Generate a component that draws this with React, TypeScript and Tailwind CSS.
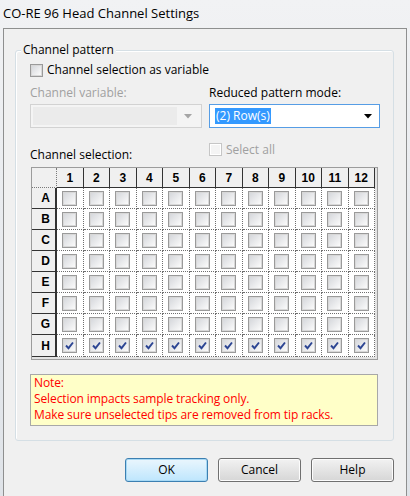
import React from 'react';

const rows = ['A', 'B', 'C', 'D', 'E', 'F', 'G', 'H'];
const cols = [1, 2, 3, 4, 5, 6, 7, 8, 9, 10, 11, 12];

const CheckBox: React.FC<{ checked?: boolean; disabled?: boolean; size?: string }> = ({
  checked,
  disabled,
  size = 'w-[13px] h-[13px]',
}) => (
  <div
    className={`${size} shrink-0 border flex items-center justify-center ${
      disabled ? 'border-[#c6c6c6] bg-[#f4f4f4]' : 'border-[#9a9a9a] bg-white'
    }`}
  >
    <div
      className={`w-full h-full border flex items-center justify-center ${
        disabled ? 'border-white bg-[#f4f4f4]' : 'border-[#d8d8d8] bg-gradient-to-br from-[#d6d8dc] to-[#fbfbfb]'
      }`}
    >
      {checked && (
        <svg width="11" height="11" viewBox="0 0 11 11">
          <path d="M2 5.5 L4.5 8.2 L9 2.5" fill="none" stroke="#2c4593" strokeWidth="1.9" />
        </svg>
      )}
    </div>
  </div>
);

const Arrow: React.FC<{ color: string }> = ({ color }) => (
  <svg width="8" height="5" viewBox="0 0 8 5">
    <path d="M0 0 L8 0 L4 4.5 Z" fill={color} />
  </svg>
);

const ChannelGrid: React.FC = () => (
  <div className="ml-[1px] w-[347px] border border-[#9c9c9c] bg-[#e3e3e3] pr-[2px] pb-[2px]">
    <div className="grid grid-cols-[25px_repeat(12,1fr)] w-[343px] font-['Liberation_Sans',sans-serif] text-[12px] font-bold text-black">
      <div className="h-[20px] bg-[#f0f0f0] border-r border-b border-dotted border-[#7a7a7a]" />
      {cols.map((c) => (
        <div
          key={c}
          className="h-[20px] bg-[#f0f0f0] border-r border-b border-[#333] flex items-center justify-center pt-[1px]"
        >
          {c}
        </div>
      ))}
      {rows.map((r) => (
        <React.Fragment key={r}>
          <div
            className={`${r === 'H' ? 'h-[22px]' : 'h-[21px]'} bg-[#f0f0f0] border-r-2 border-b border-[#333] flex items-center justify-center pl-[4px]`}
          >
            {r}
          </div>
          {cols.map((c) => (
            <div
              key={c}
              className={`${r === 'H' ? 'h-[22px]' : 'h-[21px]'} bg-white border-r border-b border-dotted border-[#6e6e6e] flex items-center justify-center`}
            >
              <CheckBox checked={r === 'H'} size="w-[15px] h-[15px]" />
            </div>
          ))}
        </React.Fragment>
      ))}
    </div>
  </div>
);

const WinButton: React.FC<{ label: string; focused?: boolean }> = ({ label, focused }) => (
  <div
    className={`w-[83px] h-[24px] rounded-[3px] border flex items-center justify-center text-[12px] text-black ${
      focused
        ? 'border-[#3c7fb1] bg-gradient-to-b from-[#eaf6fd] to-[#bee6fd] shadow-[inset_0_0_0_1px_#a7d9f5]'
        : 'border-[#707070] bg-gradient-to-b from-[#f2f2f2] to-[#d6d6d6] shadow-[inset_0_0_0_1px_#fcfcfc]'
    }`}
  >
    {label}
  </div>
);

export default function App() {
  return (
    <div className="w-[410px] h-[496px] flex flex-col bg-gradient-to-b from-[#f1f2f4] to-[#dfe3e8] font-['Open_Sans',sans-serif] overflow-hidden">
      <div className="h-[28px] shrink-0 pl-[3px] pt-[5px] text-[13px] leading-[17px] text-black">
        CO-RE 96 Head Channel Settings
      </div>

      <div className="flex-1 mx-[3px] border border-b-0 border-[#8e8f8f] bg-[#f0f0f0] flex flex-col">
        <div className="relative ml-[11px] mt-[21px] w-[379px] h-[391px] rounded-[3px] border border-[#d5dfe5] shadow-[inset_1px_1px_0_#ffffff] pl-[14px] pt-[12px] text-[12px] leading-[16px] text-black">
          <div className="absolute -top-[9px] left-[5px] px-[2px] bg-[#f0f0f0]">Channel pattern</div>

          <div className="flex items-center h-[14px]">
            <CheckBox />
            <span className="ml-[4px]">Channel selection as variable</span>
          </div>

          <div className="flex mt-[8px]">
            <div className="w-[179px] text-[#a0a0a0]">Channel variable:</div>
            <div>Reduced pattern mode:</div>
          </div>

          <div className="flex mt-[3px]">
            <div className="w-[172px] h-[24px] border border-[#d2d2d2] bg-[#f4f4f4] flex items-center p-[2px]">
              <div className="flex-1 h-full bg-[#ebebeb]" />
              <div className="w-[22px] flex justify-center">
                <Arrow color="#a5a5a5" />
              </div>
            </div>
            <div className="w-[7px]" />
            <div className="w-[171px] h-[24px] border border-[#569de5] bg-white flex items-center pl-[5px]">
              <span className="bg-[#3399ff] text-white px-[1px] leading-[16px]">(2) Row(s)</span>
              <div className="flex-1" />
              <div className="w-[22px] flex justify-center">
                <Arrow color="#000000" />
              </div>
            </div>
          </div>

          <div className="flex mt-[15px] h-[20px]">
            <div className="w-[179px] pt-[4px]">Channel selection:</div>
            <div className="flex items-start">
              <CheckBox disabled />
              <span className="ml-[4px] -mt-[1px] text-[#a0a0a0]">Select all</span>
            </div>
          </div>

          <div className="mt-[4px]">
            <ChannelGrid />
          </div>

          <div className="mt-[14px] w-[348px] h-[52px] border border-[#a8a8a8] bg-[#ffffc8] pl-[3px] text-[#ff0000] leading-[16px] tracking-[-0.1px]">
            <div>Note:</div>
            <div>Selection impacts sample tracking only.</div>
            <div>Make sure unselected tips are removed from tip racks.</div>
          </div>
        </div>

        <div className="flex justify-end gap-[10px] pr-[12px] mt-[17px]">
          <WinButton label="OK" focused />
          <WinButton label="Cancel" />
          <WinButton label="Help" />
        </div>
      </div>
    </div>
  );
}
